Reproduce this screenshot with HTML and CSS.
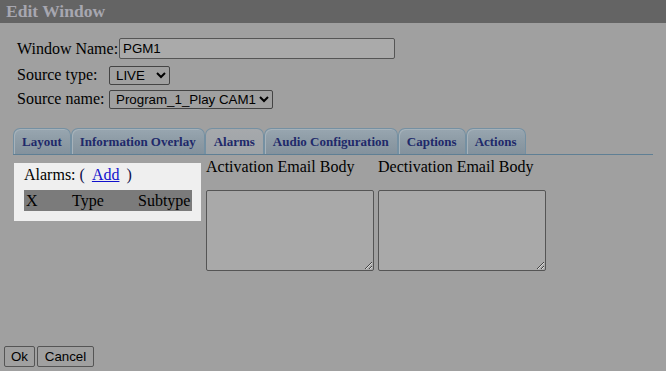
FILE: index.html
```html
<!DOCTYPE html>
<html>
<head>
<meta charset="utf-8">
<link rel="stylesheet" href="styles.css">
</head>
<body>
<div class="titlebar">Edit Window</div>
<div class="form">
  <div class="row row-name"><span class="lbl">Window Name:</span><input class="txt" type="text" value="PGM1"></div>
  <div class="row row-type"><span class="lbl">Source type:</span><select class="sel sel-type"><option>LIVE</option></select></div>
  <div class="row row-src"><span class="lbl">Source name:</span><select class="sel sel-src"><option>Program_1_Play CAM1</option></select></div>
</div>
<div class="tabs">
  <div class="tab">Layout</div>
  <div class="tab">Information Overlay</div>
  <div class="tab active">Alarms</div>
  <div class="tab">Audio Configuration</div>
  <div class="tab">Captions</div>
  <div class="tab">Actions</div>
</div>
<div class="panel">
  <div class="alarms">
    <div class="alarms-head">Alarms: <span class="paren">(</span><a href="#">Add</a><span class="paren">)</span></div>
    <div class="alarms-table"><span class="c-x">X</span><span class="c-type">Type</span><span class="c-sub">Subtype</span></div>
  </div>
  <div class="body-col first">
    <div class="body-lbl">Activation Email Body</div>
    <textarea class="ta"></textarea>
  </div>
  <div class="body-col">
    <div class="body-lbl">Dectivation Email Body</div>
    <textarea class="ta"></textarea>
  </div>
</div>
<div class="buttons">
  <button class="btn btn-ok">Ok</button><button class="btn btn-cancel">Cancel</button>
</div>
</body>
</html>
```
FILE: styles.css
```css
html, body {
  margin: 0;
  padding: 0;
  background: #a0a0a0;
  width: 666px;
  height: 371px;
  overflow: hidden;
  font-family: "Liberation Serif", serif;
  font-size: 16px;
  color: #000;
}
.titlebar {
  height: 23px;
  background: #646464;
  color: #a7a7b0;
  font-weight: bold;
  font-size: 17.5px;
  line-height: 22px;
  padding-left: 6px;
}
.form {
  padding: 15px 0 0 17px;
}
.row {
  display: flex;
  align-items: center;
}
.row-name { height: 21px; }
.row-type { height: 20px; margin-top: 6px; }
.row-src { height: 20px; margin-top: 4px; }
.lbl { white-space: nowrap; }
.row-name .lbl { width: 102px; }
.row-type .lbl, .row-src .lbl { width: 92px; }
.txt {
  box-sizing: border-box;
  width: 276px;
  height: 21px;
  background: #aaaaaa;
  border: 1px solid #555;
  border-radius: 2px;
  font-family: "Liberation Sans", sans-serif;
  font-size: 13.33px;
  padding: 0 3px;
  color: #000;
}
.sel {
  box-sizing: border-box;
  height: 19px;
  background: #a0a0a0;
  border: 1px solid #444;
  border-radius: 2px;
  font-family: "Liberation Sans", sans-serif;
  font-size: 13.33px;
  color: #000;
  padding: 0 0 0 2px;
}
.sel-type { width: 61px; }
.sel-src { width: 164px; }
.tabs {
  display: flex;
  margin: 19px 13px 0 13px;
  height: 26px;
  border-bottom: 1px solid #5f7f94;
}
.tab {
  box-sizing: border-box;
  height: 26px;
  padding: 0 8px;
  border: 1px solid #7590a2;
  border-bottom: none;
  border-radius: 7px 7px 0 0;
  background: linear-gradient(#98a6b0, #8c9aa4 55%, #84929d);
  box-shadow: inset 1px 1px 0 #a6b2ba;
  color: #20296a;
  font-weight: bold;
  font-size: 13px;
  line-height: 26px;
  white-space: nowrap;
}
.tab.active {
  background: linear-gradient(#a6a9ac, #9ea3a7);
  box-shadow: none;
}
.panel {
  display: flex;
  align-items: flex-start;
  padding: 8px 0 0 14px;
}
.alarms {
  width: 187px;
  height: 58px;
  background: #efefef;
  box-sizing: border-box;
  padding: 1px 9px 0 10px;
}
.alarms-head {
  height: 26px;
  line-height: 22px;
  white-space: nowrap;
}
.paren { color: #10104a; margin: 0 7px 0 0; }
.paren:last-child { margin: 0 0 0 7px; }
.alarms-head a { color: #1111cc; }
.alarms-table {
  display: flex;
  background: #7b7b7b;
  height: 21px;
  line-height: 21px;
  padding: 0 0 0 2px;
}
.c-x { width: 46px; }
.c-type { width: 66px; }
.body-col {
  display: flex;
  flex-direction: column;
  margin-left: 4px;
}
.body-col.first { margin-left: 5px; }
.body-lbl {
  height: 16px;
  line-height: 8px;
  white-space: nowrap;
}
.ta {
  box-sizing: border-box;
  width: 168px;
  height: 81px;
  margin-top: 11px;
  background: #a9a9a9;
  border: 1px solid #555;
  border-radius: 2px;
}
.buttons {
  position: absolute;
  left: 4px;
  top: 346px;
  display: flex;
  gap: 2px;
}
.btn {
  box-sizing: border-box;
  height: 21px;
  background: #a0a0a0;
  border: 1px solid #555;
  border-radius: 2px;
  font-family: "Liberation Sans", sans-serif;
  font-size: 13.33px;
  color: #000;
  padding: 0;
}
.btn-ok { width: 31px; }
.btn-cancel { width: 57px; }
```
